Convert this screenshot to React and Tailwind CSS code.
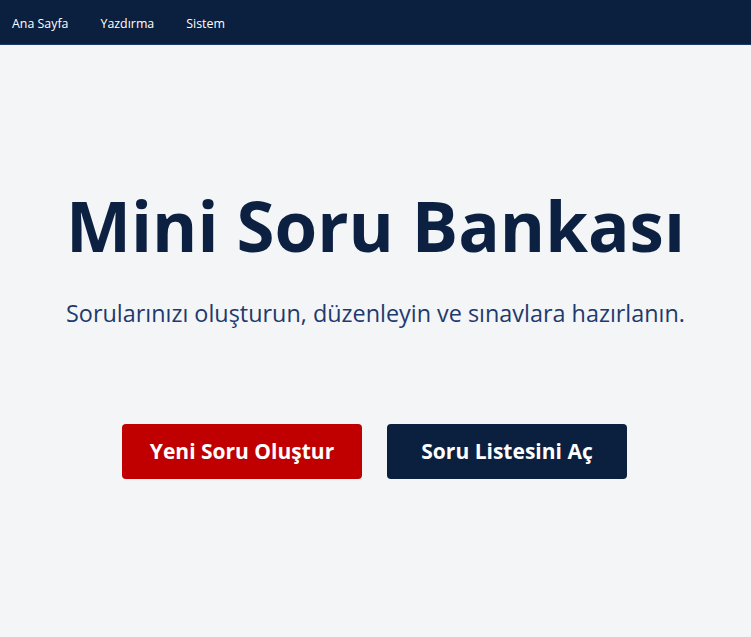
export default function App() {
  const links = ["Ana Sayfa", "Yazdırma", "Sistem"];

  return (
    <div className="min-h-screen bg-[#f4f5f7] font-['Open_Sans',sans-serif]">
      {/* Top navigation */}
      <nav className="flex h-[45px] items-center gap-[32px] border-b border-[#1d3a66] bg-[#0b1f3f] px-[12px] pt-[4px]">
        {links.map((label) => (
          <a key={label} href="#" className="text-[12.4px] text-white">
            {label}
          </a>
        ))}
      </nav>

      {/* Hero */}
      <main className="flex flex-col items-center pt-[136px]">
        <h1 className="text-[69px] font-bold leading-[88px] text-[#0c2142]">
          Mini Soru Bankası
        </h1>
        <p className="mt-[29px] text-[23.4px] leading-[30px] text-[#1e3a6e]">
          Sorularınızı oluşturun, düzenleyin ve sınavlara hazırlanın.
        </p>
        <div className="mr-[2px] mt-[96px] flex gap-[25px]">
          <button className="h-[55px] w-[240px] rounded-[4px] bg-[#c00000] text-[21px] font-bold text-white">
            Yeni Soru Oluştur
          </button>
          <button className="h-[55px] w-[240px] rounded-[4px] bg-[#0b1f3f] text-[21px] font-bold text-white">
            Soru Listesini Aç
          </button>
        </div>
      </main>
    </div>
  );
}
